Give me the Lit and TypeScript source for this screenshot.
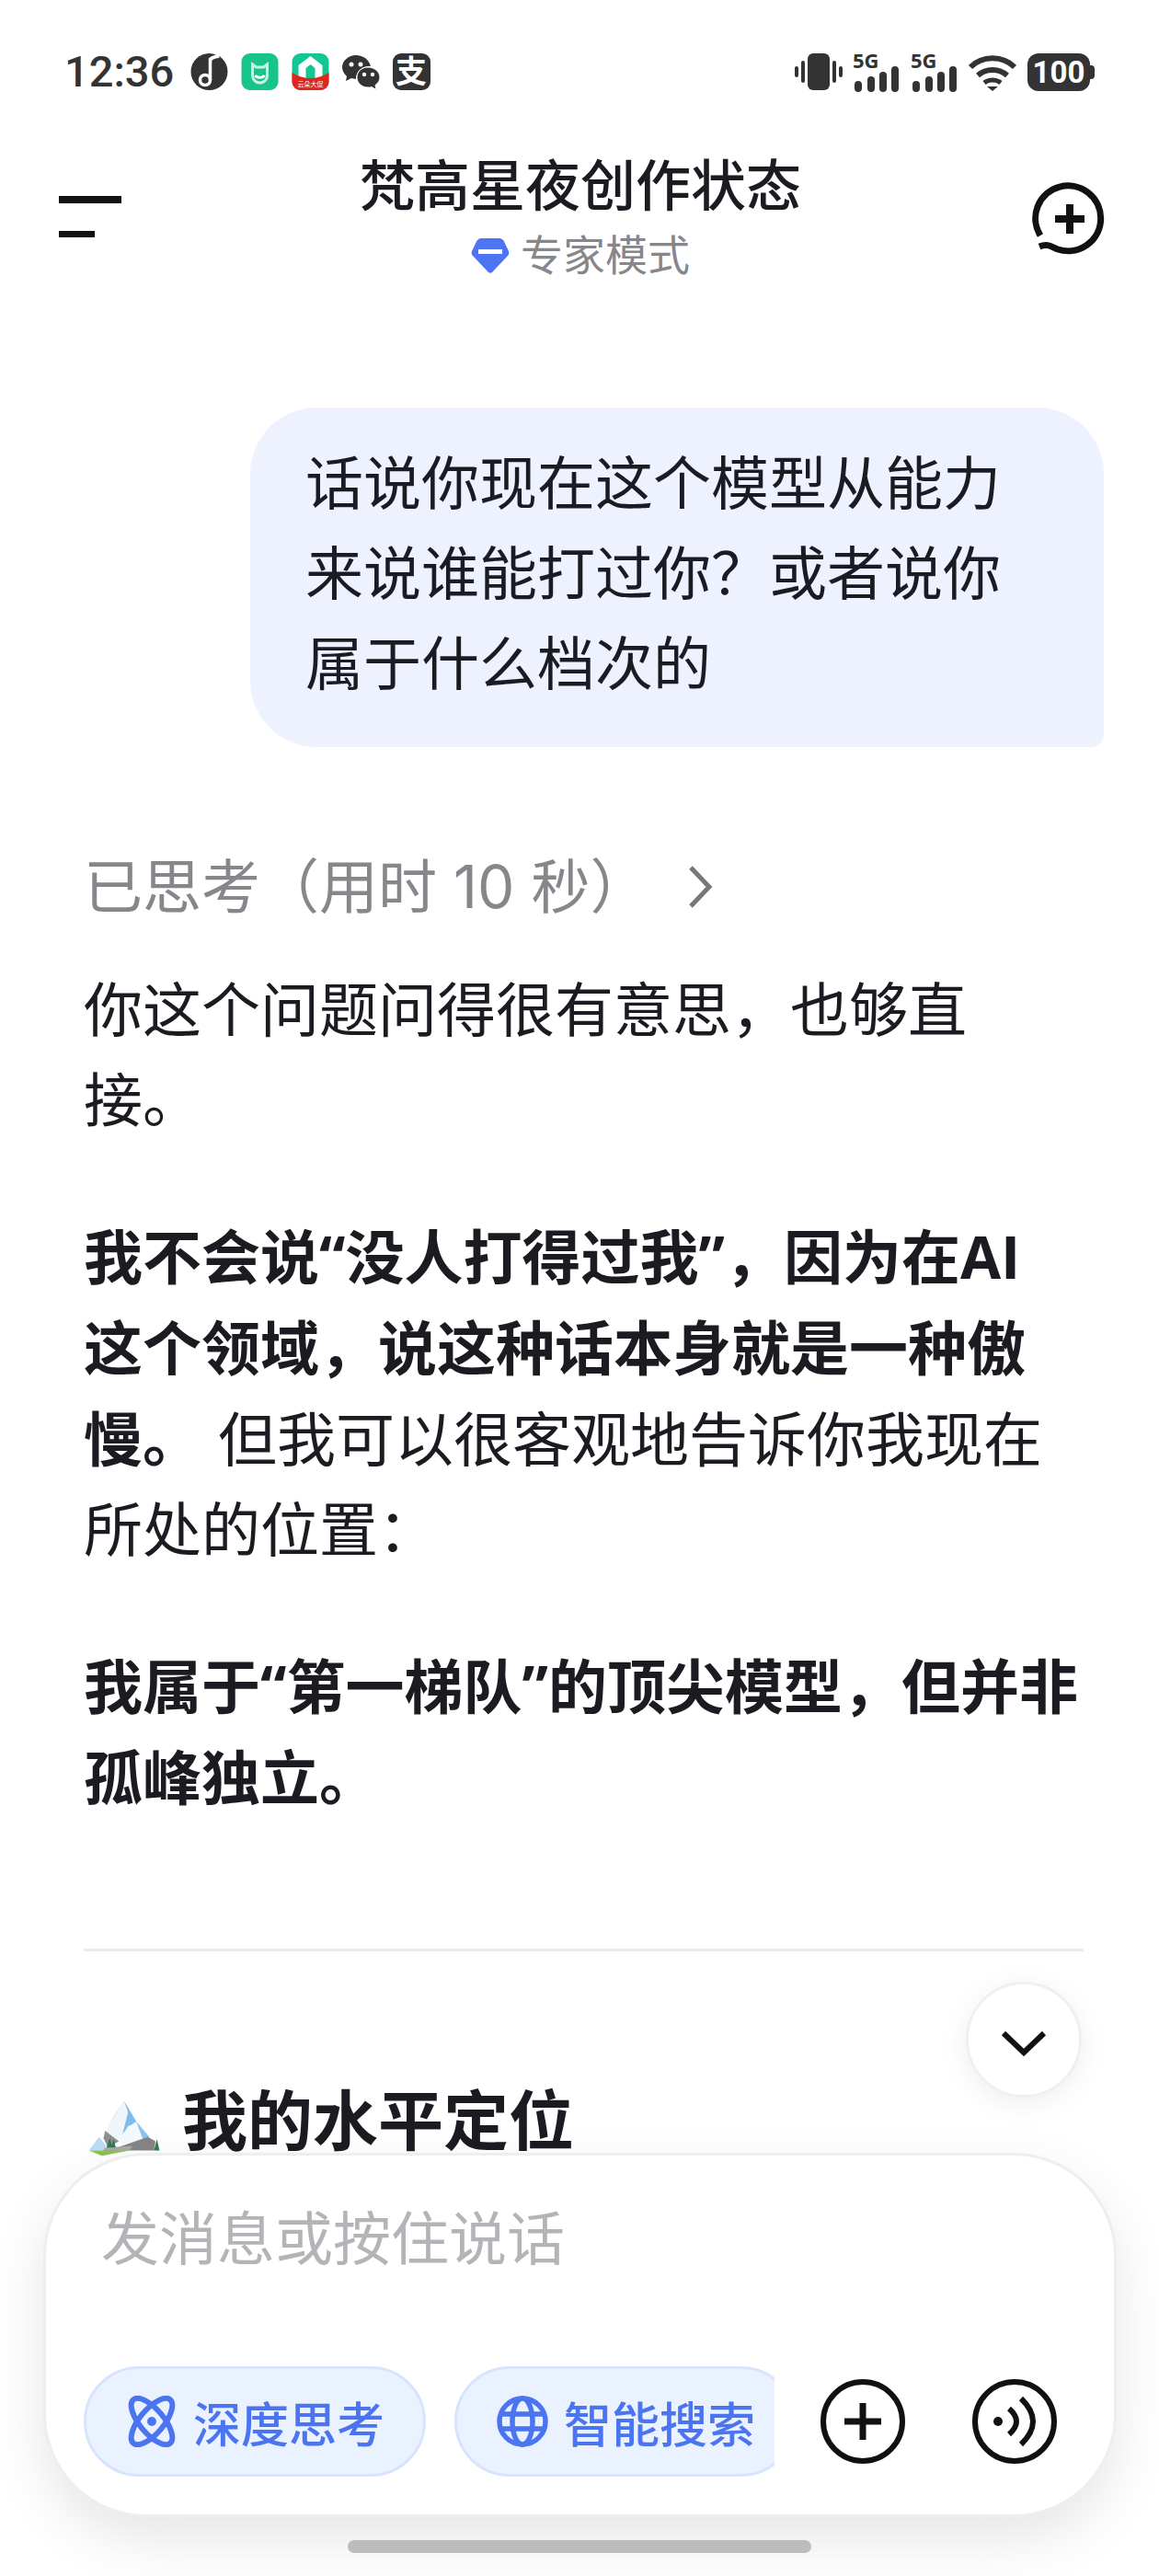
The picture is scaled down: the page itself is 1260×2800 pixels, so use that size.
import { LitElement, css, html } from "lit";
import { customElement } from "lit/decorators.js";

const bars = html`
  <svg class="signal" viewBox="0 -4 52 52">
    <text x="0" y="22" class="g5">5G</text>
    <rect x="2" y="36" width="8" height="12" rx="4" />
    <rect x="16" y="31" width="8" height="17" rx="4" />
    <rect x="29" y="26" width="8" height="22" rx="4" />
    <rect x="42" y="20" width="8" height="28" rx="4" />
  </svg>
`;

@customElement("app-root")
export class AppRoot extends LitElement {
  static styles = css`
    :host {
      display: block;
      width: 1260px;
      height: 2800px;
      background: #fff;
      overflow: hidden;
      position: relative;
      font-family: Roboto, "Noto Sans CJK SC", sans-serif;
      color: #1a1c22;
    }

    .status {
      display: flex;
      justify-content: space-between;
      align-items: center;
      height: 40px;
      padding: 58px 75px 0 70px;
      color: #333;
    }
    .status-left,
    .status-right {
      display: flex;
      align-items: center;
    }
    .time {
      font-size: 47px;
      font-weight: 500;
      line-height: 40px;
      width: 137px;
    }
    .status-left svg {
      width: 41px;
      height: 40px;
      margin-right: 14px;
      display: block;
    }
    .vibrate {
      width: 52px;
      height: 40px;
      margin-right: 11px;
    }
    .signal {
      width: 52px;
      height: 52px;
      margin: 0 11px 8px 0;
      fill: #333;
    }
    .g5 {
      font: 700 22px "Open Sans", sans-serif;
    }
    .wifi {
      width: 52px;
      height: 41px;
      margin-right: 12px;
    }
    .battery {
      position: relative;
      width: 68px;
      height: 41px;
      background: #333;
      border-radius: 12px;
      color: #fff;
      font-size: 33px;
      font-weight: 700;
      line-height: 41px;
      text-align: center;
    }
    .battery::after {
      content: "";
      position: absolute;
      right: -5px;
      top: 13px;
      width: 5px;
      height: 15px;
      background: #333;
      border-radius: 0 4px 4px 0;
    }

    .header {
      display: grid;
      grid-template-columns: 90px 1fr 90px;
      padding: 76px 58px 0 64px;
      align-items: start;
    }
    .menu {
      display: flex;
      flex-direction: column;
      gap: 30px;
      padding-top: 39px;
    }
    .menu i {
      display: block;
      height: 8px;
      width: 68px;
      background: #111;
    }
    .menu i + i {
      height: 7px;
      width: 39px;
    }
    .titles {
      text-align: center;
      padding-right: 4px;
    }
    .title {
      font-size: 60px;
      line-height: 60px;
      font-weight: 500;
    }
    .sub {
      display: flex;
      justify-content: center;
      align-items: center;
      gap: 12px;
      margin-top: 20px;
      font-size: 46px;
      line-height: 48px;
      color: #86868b;
    }
    .sub svg {
      width: 42px;
      height: 38px;
    }
    .new-chat {
      justify-self: end;
      width: 84px;
      height: 84px;
      margin-top: 19px;
    }

    .bubble {
      box-sizing: border-box;
      width: 928px;
      margin: 141px 60px 0 auto;
      padding: 35px 60px 40px 60px;
      background: #eef2fe;
      border-radius: 72px 72px 14px 72px;
      font-size: 63px;
      line-height: 98px;
    }

    .answer {
      padding: 103px 82px 0 91px;
      font-family: Inter, "Noto Sans CJK SC", sans-serif;
      font-size: 64px;
      line-height: 98px;
    }
    .thought {
      display: flex;
      align-items: center;
      color: #86868b;
    }
    .thought svg {
      width: 32px;
      height: 48px;
      margin-left: 40px;
    }
    .answer p {
      margin: 36px 0 0;
    }
    .answer p + p {
      margin-top: 72px;
    }
    .answer p + p + p {
      margin-top: 72px;
    }
    .answer b {
      font-family: "Open Sans", "Noto Sans CJK SC", sans-serif;
      font-weight: 700;
    }
    .answer hr {
      border: none;
      height: 3px;
      background: #ebebeb;
      margin: 136px 0 0;
    }
    .heading {
      display: flex;
      align-items: center;
      gap: 24px;
      margin-top: 135px;
      font-size: 71px;
      line-height: 98px;
      font-weight: 700;
    }
    .heading svg {
      width: 78px;
      height: 62px;
      flex: none;
      margin: 16px 0 0 5px;
    }

    .to-bottom {
      position: absolute;
      left: 1050px;
      top: 2154px;
      box-sizing: border-box;
      width: 126px;
      height: 126px;
      border-radius: 50%;
      background: #fff;
      border: 3px solid #f0f0f0;
      box-shadow: 0 6px 30px rgba(0, 0, 0, 0.07);
      display: flex;
      align-items: center;
      justify-content: center;
    }
    .to-bottom svg {
      width: 52px;
      height: 30px;
      margin-top: 8px;
    }

    .composer {
      position: absolute;
      left: 47px;
      top: 2340px;
      box-sizing: border-box;
      width: 1167px;
      height: 396px;
      padding: 43px 41px 41px;
      background: #fff;
      border: 3px solid #eeeeee;
      border-radius: 112px;
      box-shadow: 0 24px 60px rgba(0, 0, 0, 0.1);
      display: flex;
      flex-direction: column;
      justify-content: space-between;
    }
    .placeholder {
      padding-left: 19px;
      font-size: 63px;
      line-height: 98px;
      color: #b4b4b8;
    }
    .tools {
      display: flex;
      align-items: center;
    }
    .pills {
      display: flex;
      gap: 31px;
      width: 751px;
      overflow: hidden;
      flex: none;
    }
    .pill {
      box-sizing: border-box;
      display: flex;
      align-items: center;
      gap: 17px;
      flex: none;
      width: 372px;
      height: 120px;
      padding-left: 43px;
      background: #ebf2ff;
      border: 3px solid #d6e4fd;
      border-radius: 60px;
      color: #4a74f0;
      font-size: 52px;
      font-weight: 500;
      white-space: nowrap;
    }
    .pill svg {
      width: 56px;
      height: 56px;
      flex: none;
    }
    .round {
      width: 92px;
      height: 92px;
      flex: none;
      margin-left: 50px;
    }
    .round + .round {
      margin-left: 73px;
    }

    .home-bar {
      position: absolute;
      left: 378px;
      top: 2761px;
      width: 504px;
      height: 14px;
      border-radius: 7px;
      background: #bcbcbc;
    }
  `;

  render() {
    return html`
      <div class="status">
        <div class="status-left">
          <div class="time">12:36</div>
          <svg viewBox="0 0 40 40">
            <circle cx="20" cy="20" r="20" fill="#333" />
            <path d="M21 5v24" stroke="#fff" stroke-width="3.500" />
            <path d="M20 5c3-3 7-3 10-5l1 5c-4 0-7 1-9 4z" fill="#fff" />
            <circle cx="15.500" cy="29" r="5.500" fill="none" stroke="#fff" stroke-width="3.500" />
          </svg>
          <svg viewBox="0 0 40 40">
            <rect width="40" height="40" rx="9" fill="#18c48a" />
            <path d="M12 12l4 3h8l4-3v12c0 5-4 8-8 8s-8-3-8-8z" fill="none" stroke="#c8f5e2" stroke-width="3" />
            <path d="M15 24c2 3 8 3 10 0" fill="none" stroke="#fff" stroke-width="3" />
          </svg>
          <svg viewBox="0 0 40 40">
            <rect width="40" height="40" rx="9" fill="#12c795" />
            <path d="M7 27V13L20 3l13 10v14h-8V16l-5-4-5 4v11z" fill="#fff" />
            <path d="M0 21Q20 33 40 21v10a9 9 0 0 1-9 9H9a9 9 0 0 1-9-9z" fill="#e0261d" />
            <text x="20" y="36" text-anchor="middle" font-size="7" fill="#fff">云朵大促</text>
          </svg>
          <svg viewBox="0 0 41 40">
            <path d="M15 2C7 2 0 8 0 15c0 4 2 7 5 10l-1 5 6-3c2 .5 3 .8 5 .8 0-8 6-14 16-14C29 7 23 2 15 2z" fill="#333" />
            <path d="M28 15c-7 0-12 5-12 11s5 11 12 11c2 0 3 0 4-.5l5 3-1-5c3-2 5-5 5-8.500 0-6-6-11-13-11z" fill="#333" stroke="#fff" stroke-width="1" />
            <circle cx="10" cy="12" r="2.500" fill="#fff" />
            <circle cx="20" cy="12" r="2.500" fill="#fff" />
            <circle cx="24" cy="23" r="2.200" fill="#fff" />
            <circle cx="33" cy="23" r="2.200" fill="#fff" />
          </svg>
          <svg viewBox="0 0 41 40">
            <rect width="41" height="40" rx="9" fill="#333" />
            <text x="20" y="32" text-anchor="middle" font-size="34" font-weight="700" fill="#fff">支</text>
          </svg>
        </div>
        <div class="status-right">
          <svg class="vibrate" viewBox="0 0 52 40" fill="#333">
            <rect x="14" y="0" width="24" height="40" rx="6" />
            <rect x="0" y="14" width="4" height="12" rx="2" />
            <rect x="7" y="8" width="4" height="24" rx="2" />
            <rect x="41" y="8" width="4" height="24" rx="2" />
            <rect x="48" y="14" width="4" height="12" rx="2" />
          </svg>
          ${bars} ${bars}
          <svg class="wifi" viewBox="0 0 52 41" fill="none" stroke="#333" stroke-width="6">
            <path d="M2 15C15 2 37 2 50 15" />
            <path d="M10 24c9-8 23-8 32 0" />
            <path d="M17 32c5-4 13-4 18 0" stroke-width="5" />
            <path d="M20 36h12l-6 5z" fill="#333" stroke="none" />
          </svg>
          <div class="battery">100</div>
        </div>
      </div>

      <div class="header">
        <div class="menu"><i></i><i></i></div>
        <div class="titles">
          <div class="title">梵高星夜创作状态</div>
          <div class="sub">
            <svg viewBox="0 0 42 38">
              <path d="M11 0h20q3 0 4.500 2.500L41 14q1 3-1 5L23 37q-2 1.500-4 0L2 19q-2-2-1-5L6.500 2.500Q8 0 11 0z" fill="#4d74f5" />
              <rect x="8" y="12" width="26" height="5" fill="#fff" />
            </svg>
            专家模式
          </div>
        </div>
        <svg class="new-chat" viewBox="0 0 84 84" fill="none" stroke="#111" stroke-width="7">
          <path d="M13 63A35.500 35.500 0 1 1 32 78C26 76 22 71 12 75" />
          <path d="M45 29v32M29 45h32" stroke-width="8" />
        </svg>
      </div>

      <div class="bubble">话说你现在这个模型从能力来说谁能打过你？或者说你属于什么档次的</div>

      <div class="answer">
        <div class="thought">
          已思考（用时 10 秒）
          <svg viewBox="0 0 32 48" fill="none" stroke="#777" stroke-width="5">
            <path d="M6 3l20 21L6 45" />
          </svg>
        </div>
        <p>你这个问题问得很有意思，也够直接。</p>
        <p><b>我不会说“没人打得过我”，因为在AI<br />这个领域，说这种话本身就是一种傲慢。</b> 但我可以很客观地告诉你我现在所处的位置：</p>
        <p><b>我属于“第一梯队”的顶尖模型，但并非孤峰独立。</b></p>
        <hr />
        <div class="heading">
          <svg viewBox="105 128 235 186">
            <path d="M107 295l33-45 25 30-15 15z" fill="#bcdcf4" />
            <path d="M222 132l-62 103 45 30 95-15z" fill="#eef6fc" />
            <path d="M222 132l-57 93 25-45z" fill="#b5d9f4" />
            <path d="M222 132l43 73-30 10-20 35 20-80z" fill="#7fbcec" />
            <path d="M262 200l43 50-90 25-20-10 45-50z" fill="#f4f9fd" />
            <path d="M262 200l43 50-22 6z" fill="#8cc2ee" />
            <path d="M160 230l45 35-35 20-15-30z" fill="#8f8f8f" />
            <path d="M215 280l85-30 25 15-5 30H180z" fill="#858585" />
            <path d="M160 285l90-5-10 15-90 3z" fill="#a8a8a8" />
            <path d="M107 295h133l-90 17z" fill="#8cc152" />
            <path d="M175 255l-10 30h20zM188 258l-8 27h15zM330 258l-10 37h18z" fill="#2e7d4f" />
          </svg>
          我的水平定位
        </div>
      </div>

      <div class="to-bottom">
        <svg viewBox="0 0 52 30" fill="none" stroke="#111" stroke-width="6">
          <path d="M4 4l22 21L48 4" />
        </svg>
      </div>

      <div class="composer">
        <div class="placeholder">发消息或按住说话</div>
        <div class="tools">
          <div class="pills">
            <div class="pill">
              <svg viewBox="0 0 56 56" fill="none" stroke="currentColor" stroke-width="6">
                <ellipse cx="28" cy="28" rx="13" ry="31" transform="rotate(40 28 28)" />
                <ellipse cx="28" cy="28" rx="13" ry="31" transform="rotate(-40 28 28)" />
                <circle cx="28" cy="28" r="5" fill="currentColor" stroke="none" />
              </svg>
              深度思考
            </div>
            <div class="pill">
              <svg viewBox="0 0 56 56" fill="none" stroke="currentColor" stroke-width="5.500">
                <circle cx="28" cy="28" r="25" />
                <ellipse cx="28" cy="28" rx="11" ry="25" />
                <path d="M4 20h48M4 36h48" />
              </svg>
              智能搜索
            </div>
          </div>
          <svg class="round" viewBox="0 0 92 92" fill="none" stroke="#111" stroke-width="6">
            <circle cx="46" cy="46" r="43" />
            <path d="M46 26v40M26 46h40" stroke-width="7" />
          </svg>
          <svg class="round" viewBox="0 0 92 92" fill="none" stroke="#111" stroke-width="6">
            <circle cx="46" cy="46" r="43" />
            <circle cx="28" cy="46" r="5" fill="#111" stroke="none" />
            <path d="M40 32Q56 46 40 60" />
            <path d="M53 21Q79 46 53 71" />
          </svg>
        </div>
      </div>

      <div class="home-bar"></div>
    `;
  }
}
